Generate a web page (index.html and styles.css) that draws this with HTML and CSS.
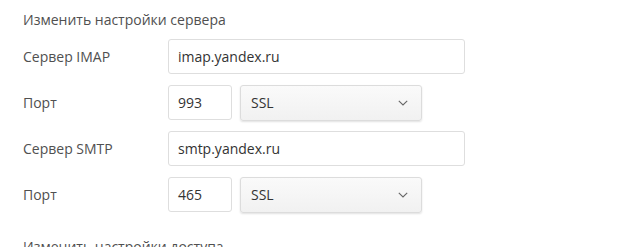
FILE: index.html
```html
<!DOCTYPE html>
<html lang="ru">
<head>
<meta charset="utf-8">
<link rel="stylesheet" href="styles.css">
</head>
<body>
<div class="page">
  <div class="section-title">Изменить настройки сервера</div>
  <div class="row">
    <div class="label">Сервер IMAP</div>
    <div class="field wide">imap.yandex.ru</div>
  </div>
  <div class="row">
    <div class="label">Порт</div>
    <div class="field port">993</div>
    <div class="select"><span>SSL</span><svg width="10" height="6" viewBox="0 0 10 6"><path d="M0.8 0.8 L5 5 L9.2 0.8" fill="none" stroke="#666" stroke-width="1.1"/></svg></div>
  </div>
  <div class="row">
    <div class="label">Сервер SMTP</div>
    <div class="field wide">smtp.yandex.ru</div>
  </div>
  <div class="row">
    <div class="label">Порт</div>
    <div class="field port">465</div>
    <div class="select"><span>SSL</span><svg width="10" height="6" viewBox="0 0 10 6"><path d="M0.8 0.8 L5 5 L9.2 0.8" fill="none" stroke="#666" stroke-width="1.1"/></svg></div>
  </div>
  <div class="section-title next">Изменить настройки доступа</div>
</div>
</body>
</html>
```
FILE: styles.css
```css
html, body {
  margin: 0;
  background: #fff;
}
.page {
  padding: 10px 0 0 23px;
  font-family: "Open Sans", "Noto Sans", sans-serif;
  font-size: 14px;
  color: #505050;
}
.section-title {
  line-height: 20px;
  margin-bottom: 9px;
}
.section-title.next {
  margin-top: 25px;
}
.row {
  display: flex;
  align-items: center;
  gap: 8px;
  height: 35px;
  margin-bottom: 11px;
}
.label {
  width: 137px;
  flex: none;
}
.field {
  box-sizing: border-box;
  height: 35px;
  border: 1px solid #dedede;
  border-radius: 3px;
  padding: 0 9px;
  display: flex;
  align-items: center;
  color: #333;
}
.wide { width: 297px; }
.port { width: 64px; }
.select {
  box-sizing: border-box;
  width: 182px;
  height: 36px;
  border: 1px solid #dcdcdc;
  border-radius: 3px;
  background: linear-gradient(#fafafa, #f1f1f1);
  box-shadow: 0 1px 2px rgba(0,0,0,0.12);
  display: flex;
  align-items: center;
  justify-content: space-between;
  padding: 0 13px 0 10px;
  color: #333;
}
```
